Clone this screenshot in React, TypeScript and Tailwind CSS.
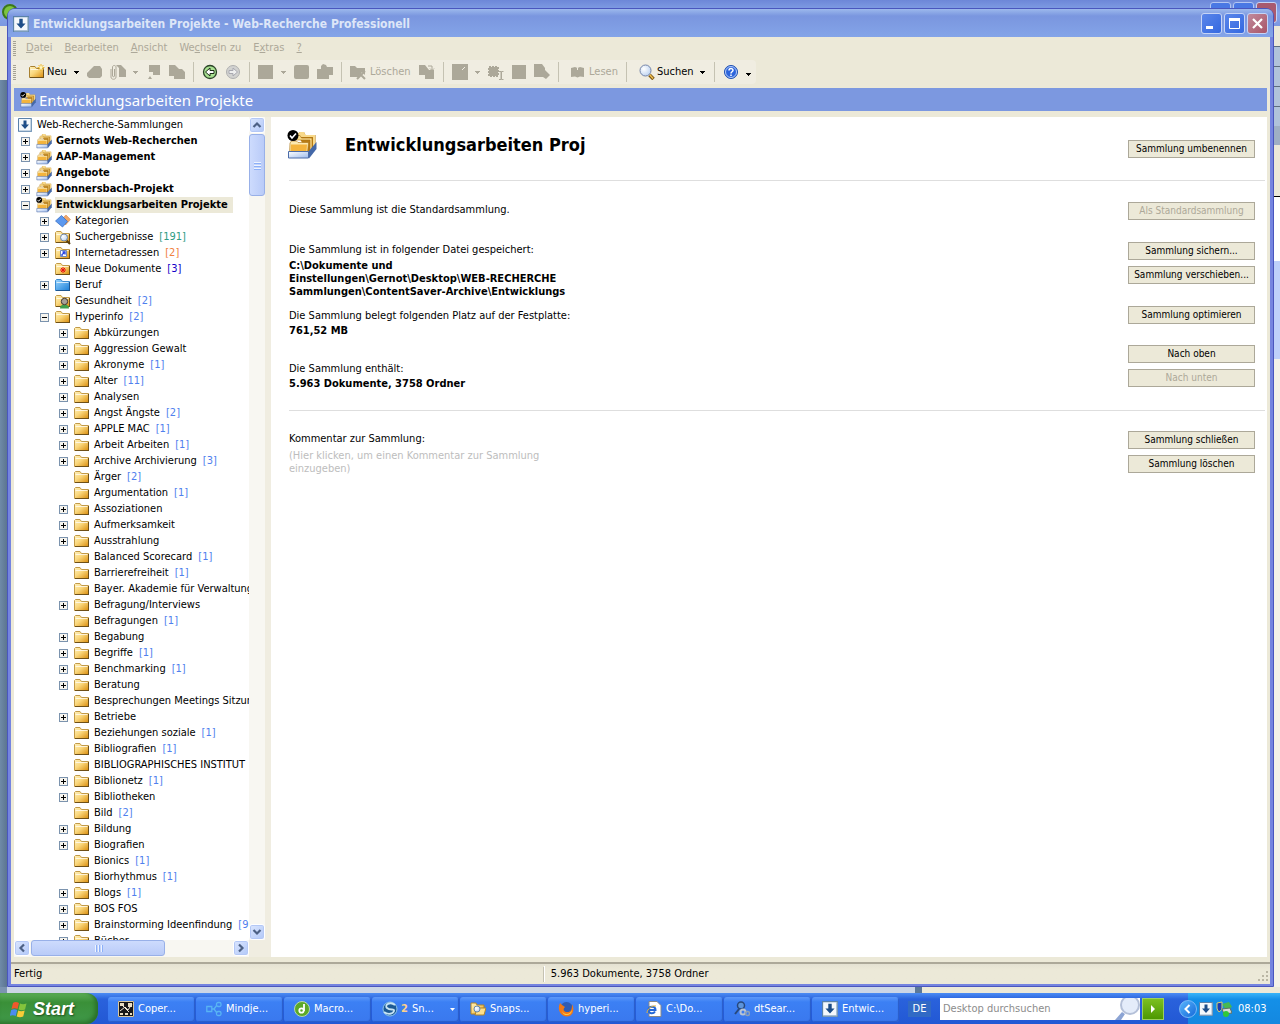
import { ReactNode, useState } from "react";
import clsx from "clsx";

type IconName =
  | "archive"
  | "archive-checked"
  | "categories"
  | "search-folder"
  | "link-folder"
  | "new-folder"
  | "blue-folder"
  | "person-folder"
  | "folder";

type TreeNode = {
  level: 0 | 1 | 2;
  label: string;
  sign?: "+" | "-";
  icon: IconName;
  count?: string;
  countColor?: string;
  selected?: boolean;
};

const topNodes: TreeNode[] = [
  { level: 0, label: "Gernots Web-Recherchen", sign: "+", icon: "archive" },
  { level: 0, label: "AAP-Management", sign: "+", icon: "archive" },
  { level: 0, label: "Angebote", sign: "+", icon: "archive" },
  { level: 0, label: "Donnersbach-Projekt", sign: "+", icon: "archive" },
  { level: 0, label: "Entwicklungsarbeiten Projekte", sign: "-", icon: "archive-checked", selected: true },
  { level: 1, label: "Kategorien", sign: "+", icon: "categories" },
  { level: 1, label: "Suchergebnisse", sign: "+", icon: "search-folder", count: "191", countColor: "text-[#2f9c84]" },
  { level: 1, label: "Internetadressen", sign: "+", icon: "link-folder", count: "2", countColor: "text-[#f08040]" },
  { level: 1, label: "Neue Dokumente", icon: "new-folder", count: "3", countColor: "text-[#1400c8]" },
  { level: 1, label: "Beruf", sign: "+", icon: "blue-folder" },
  { level: 1, label: "Gesundheit", icon: "person-folder", count: "2" },
  { level: 1, label: "Hyperinfo", sign: "-", icon: "folder", count: "2" },
];

// label, has children, document count
const hyperinfo: [string, boolean, string?][] = [
  ["Abkürzungen", true],
  ["Aggression Gewalt", true],
  ["Akronyme", true, "1"],
  ["Alter", true, "11"],
  ["Analysen", true],
  ["Angst Ängste", true, "2"],
  ["APPLE MAC", true, "1"],
  ["Arbeit Arbeiten", true, "1"],
  ["Archive Archivierung", true, "3"],
  ["Ärger", false, "2"],
  ["Argumentation", false, "1"],
  ["Assoziationen", true],
  ["Aufmerksamkeit", true],
  ["Ausstrahlung", true],
  ["Balanced Scorecard", false, "1"],
  ["Barrierefreiheit", false, "1"],
  ["Bayer. Akademie für Verwaltung", false],
  ["Befragung/Interviews", true],
  ["Befragungen", false, "1"],
  ["Begabung", true],
  ["Begriffe", true, "1"],
  ["Benchmarking", true, "1"],
  ["Beratung", true],
  ["Besprechungen Meetings Sitzung", false],
  ["Betriebe", true],
  ["Beziehungen soziale", false, "1"],
  ["Bibliografien", false, "1"],
  ["BIBLIOGRAPHISCHES INSTITUT", false],
  ["Biblionetz", true, "1"],
  ["Bibliotheken", true],
  ["Bild", false, "2"],
  ["Bildung", true],
  ["Biografien", true],
  ["Bionics", false, "1"],
  ["Biorhythmus", false, "1"],
  ["Blogs", true, "1"],
  ["BOS FOS", true],
  ["Brainstorming Ideenfindung", true, "9"],
  ["Bücher", true],
];

const nodes: TreeNode[] = [
  ...topNodes,
  ...hyperinfo.map(([label, open, count]): TreeNode => ({
    level: 2,
    label,
    sign: open ? "+" : undefined,
    icon: "folder",
    count,
  })),
];

function Gradients() {
  return (
    <svg width="0" height="0" className="absolute" aria-hidden="true">
      <defs>
        <linearGradient id="gold" x1="0" y1="0" x2="1" y2="1">
          <stop offset="0" stopColor="#fff2bc" />
          <stop offset="0.45" stopColor="#fad77c" />
          <stop offset="1" stopColor="#d98c0c" />
        </linearGradient>
        <linearGradient id="sky" x1="0" y1="0" x2="1" y2="1">
          <stop offset="0" stopColor="#9ad6ff" />
          <stop offset="1" stopColor="#1b7fd8" />
        </linearGradient>
        <linearGradient id="tray" x1="0" y1="0" x2="1" y2="1">
          <stop offset="0" stopColor="#ffffff" />
          <stop offset="1" stopColor="#9dbbec" />
        </linearGradient>
        <radialGradient id="lens" cx="0.35" cy="0.35" r="0.8">
          <stop offset="0" stopColor="#ffffff" />
          <stop offset="1" stopColor="#b4cdf0" />
        </radialGradient>
      </defs>
    </svg>
  );
}

function ArchiveIcon({ checked, className }: { checked?: boolean; className: string }) {
  return (
    <svg viewBox="0 0 30 30" className={className} aria-hidden="true">
      <path d="M11 6V3.500L13 2h4l1.500 3H28.500v12L22 24Z" fill="#b87c14" />
      <path d="M11 6V3.500L13 2h4l1.500 3H28v10l-2 3V7H11Z" fill="#f8d98a" />
      <path d="M7 9V7l2-1.500h4L14.500 8H25v12l-2 2V10H7Z" fill="#f8d98a" stroke="#a87010" strokeWidth=".6" />
      <path d="M3 13l1.500-2h5l1.500 1.500H21.500L20.500 23H2.500Z" fill="#fce9b0" stroke="#a87010" strokeWidth=".6" />
      <path d="M4 14.500H20L19.500 22H3.500Z" fill="#f4b43c" />
      <path d="M21 22l8.500-10v7L22 28.500Z" fill="#4468a8" />
      <path d="M1.500 21.500H21.500V28H1.500Z" fill="url(#tray)" stroke="#4c6ca8" />
      {checked && (
        <>
          <circle cx="6" cy="5.500" r="5.500" fill="#000" />
          <path d="M3 5.500l2 2.500 4-4.500" fill="none" stroke="#fff" strokeWidth="1.600" />
        </>
      )}
    </svg>
  );
}

function FolderShape({ fill, edge, bottom }: { fill: string; edge: string; bottom: string }) {
  return (
    <>
      <path d="M.5 13.500V3.500L1.500 2.500H6L7.500 4.500H14.500V13.500Z" fill={fill} stroke={edge} />
      <path d="M1.500 5.500H13.500" stroke="#fff" strokeOpacity="0.700" />
      <path d="M1 13.500H15M14.500 5V14" stroke={bottom} />
    </>
  );
}

function TreeIcon({ name }: { name: IconName }) {
  if (name === "archive" || name === "archive-checked") {
    return <ArchiveIcon checked={name === "archive-checked"} className="size-4 shrink-0" />;
  }
  return (
    <svg viewBox="0 0 16 16" className="size-4 shrink-0" aria-hidden="true">
      {name === "categories" && (
        <>
          <path d="M11 2l4.500 4.500-5 5.500-5-5Z" fill="#f0a868" stroke="#d08040" strokeWidth=".5" />
          <path d="M6.500 2.500l6 6-5 5.500L.5 8Z" fill="#5c98ee" stroke="#3068c0" strokeWidth=".7" />
        </>
      )}
      {name === "blue-folder" && <FolderShape fill="url(#sky)" edge="#3a8ad0" bottom="#1d5590" />}
      {name !== "categories" && name !== "blue-folder" && (
        <FolderShape fill="url(#gold)" edge="#c29a48" bottom="#6e5018" />
      )}
      {name === "search-folder" && (
        <>
          <path d="M11.500 11.500L15 15" stroke="#5a4010" strokeWidth="2" />
          <circle cx="9" cy="8.500" r="3.500" fill="url(#lens)" stroke="#7088a8" />
        </>
      )}
      {name === "link-folder" && (
        <>
          <path d="M5.500 5.500h6v6h-6Z" fill="#fff" stroke="#7088b8" />
          <path d="M7 11V9.500L9 8M7.500 7H10V9.500" fill="none" stroke="#1c3ce0" strokeWidth="1.300" />
        </>
      )}
      {name === "new-folder" && (
        <path d="M8 6v6M5 9h6M6 7l4 4M10 7l-4 4" stroke="#e81010" />
      )}
      {name === "person-folder" && (
        <>
          <path d="M5 15.500c0-3 2-4 4.500-4s4.500 1 4.500 4Z" fill="#3fa04c" />
          <circle cx="9.500" cy="8.500" r="3.200" fill="#a8a098" stroke="#403830" />
        </>
      )}
    </svg>
  );
}

function AppIcon({ className = "size-[14px]" }: { className?: string }) {
  return (
    <svg viewBox="0 0 14 14" className={clsx("shrink-0", className)} aria-hidden="true">
      <path d="M.5.5h13v13H.5Z" fill="#f4f8fc" stroke="#5a82aa" />
      <path d="M1 13h12V1" fill="none" stroke="#9ab4cc" />
      <path d="M5.500 2.500h3V6.500h2.500L7 11 3 6.500h2.500Z" fill="#1d4d88" />
    </svg>
  );
}

function Expander({ sign }: { sign?: "+" | "-" }) {
  if (!sign) return <span className="w-[9px] shrink-0" />;
  return (
    <button type="button" aria-label={sign === "+" ? "Aufklappen" : "Zuklappen"} className="size-[9px] shrink-0">
      <svg viewBox="0 0 9 9" className="block size-[9px]" shapeRendering="crispEdges">
        <path d="M.5.5h8v8h-8Z" fill="#f6f4ee" stroke="#7b93ae" />
        <path d="M2 4.500h5" stroke="#000" />
        {sign === "+" && <path d="M4.500 2v5" stroke="#000" />}
      </svg>
    </button>
  );
}

const indent = ["pl-[7px]", "pl-[26px]", "pl-[45px]"];

function TreeRow({ node }: { node: TreeNode }) {
  return (
    <li className={clsx("flex h-4 items-center whitespace-nowrap", indent[node.level])}>
      <Expander sign={node.sign} />
      <span className="w-[6px] shrink-0" />
      <TreeIcon name={node.icon} />
      <span
        className={clsx(
          "ml-[3px] h-4 pr-[5px] pl-px leading-4",
          node.level === 0 && "font-bold",
          node.selected && "bg-[#ece9d8]"
        )}
      >
        {node.label}
      </span>
      {node.count && (
        <span className={clsx("ml-px leading-4", node.countColor ?? "text-[#4f7fee]")}>[{node.count}]</span>
      )}
    </li>
  );
}

function ScrollButton({ label, d }: { label: string; d: string }) {
  return (
    <button
      type="button"
      aria-label={label}
      className="size-4 shrink-0 rounded-[3px] border border-white bg-linear-to-br from-[#dbe6fe] to-[#b2c8f8] shadow-[inset_0_0_0_1px_#b4c8f6]"
    >
      <svg viewBox="0 0 14 14" className="block size-[14px]">
        <path d={d} fill="none" stroke="#4d6185" strokeWidth="2.200" />
      </svg>
    </button>
  );
}

/* ---------- toolbar ---------- */

function ToolButton({ label, disabled = true, children }: { label: string; disabled?: boolean; children: ReactNode }) {
  return (
    <button type="button" aria-label={label} disabled={disabled} className="flex w-[23px] shrink-0 items-center justify-center">
      <svg viewBox="0 0 16 16" className="size-4" fill="#aca899">
        {children}
      </svg>
    </button>
  );
}

function DropArrow({ dark }: { dark?: boolean }) {
  return (
    <button type="button" aria-label="Mehr" className="flex w-[13px] shrink-0 items-center justify-center">
      <svg viewBox="0 0 5 3" className="h-[3px] w-[5px]" shapeRendering="crispEdges">
        <path d="M0 0h5L2.500 3Z" fill={dark ? "#000" : "#aca899"} />
      </svg>
    </button>
  );
}

function Separator() {
  return (
    <span className="flex w-[10px] shrink-0 justify-center py-[2px]">
      <span className="w-px bg-[#c5c2b2]" />
    </span>
  );
}

function Grip() {
  return (
    <svg viewBox="0 0 3 15" className="h-[15px] w-[3px] shrink-0" shapeRendering="crispEdges" aria-hidden="true">
      <path d="M1.500 0V15" stroke="#a5a294" strokeWidth="3" strokeDasharray="1 1" />
    </svg>
  );
}

function Toolbar() {
  return (
    <div className="flex h-6 w-fit items-stretch rounded-r-sm bg-[#f0ede1] pr-px">
      <span className="flex w-[14px] items-center pl-[2px]">
        <Grip />
      </span>
      <button type="button" className="flex w-[45px] items-center gap-[2px] pl-1">
        <svg viewBox="0 0 16 16" className="size-4 shrink-0">
          <FolderShape fill="url(#gold)" edge="#a88030" bottom="#6e5018" />
          <path d="M12 0v7M8.500 3.500h7M9.500 1l5 5M14.500 1l-5 5" stroke="#f0b828" />
          <circle cx="12" cy="3.500" r="1.500" fill="#fff8c0" />
        </svg>
        Neu
      </button>
      <DropArrow dark />
      <ToolButton label="Dokument">
        <path d="M0 9l4-4 3-3h6l2 3v7l-2 2H2l-2-2Z" />
      </ToolButton>
      <ToolButton label="Anhang">
        <path d="M6 1h5l5 5v7H9V4Z" />
        <path d="M1 5v8c0 3 5 3 5 0V3c0-2-3.500-2-3.500 0v9c0 1 2 1 2 0V5" fill="none" stroke="#aca899" />
      </ToolButton>
      <DropArrow />
      <ToolButton label="Markieren">
        <path d="M3 1h11v10H7V8H3ZM2 15l2-3 2 3Z" />
      </ToolButton>
      <ToolButton label="Kopieren">
        <path d="M0 1h6l4 4h3l3 3v7H5v-3H0Z" />
      </ToolButton>
      <Separator />
      <ToolButton label="Zurück" disabled={false}>
        <circle cx="8" cy="8" r="6.500" fill="#a8e090" stroke="#2c4428" strokeWidth="1.300" />
        <path d="M3.500 8L8 4v2.500h4v3H8V12Z" fill="#fff" stroke="#1c2c18" />
      </ToolButton>
      <ToolButton label="Vorwärts">
        <circle cx="8" cy="8" r="6.500" fill="#d2d2d0" stroke="#b0b0b0" />
        <path d="M12.500 8L8 4v2.500H4v3h4V12Z" fill="#eee" stroke="#a8a8b0" />
      </ToolButton>
      <Separator />
      <ToolButton label="Ansicht">
        <path d="M0 1h15v14H0Z" />
      </ToolButton>
      <DropArrow />
      <ToolButton label="Notiz">
        <rect x="0" y="1" width="15" height="14" rx="2" />
      </ToolButton>
      <ToolButton label="Anlegen">
        <path d="M0 5h4V2l2-2 3 1 1 2h6v8h-4v4H0Z" />
      </ToolButton>
      <Separator />
      <button type="button" disabled className="flex w-[69px] items-center gap-1 pl-1 text-[#aca899]">
        <svg viewBox="0 0 16 16" className="size-4 shrink-0" fill="#aca899">
          <path d="M0 2h5l2 2h8v7l-3-3-3 5H0Z" />
          <path d="M7 7l8 8M15 7l-8 8" stroke="#aca899" strokeWidth="2" />
        </svg>
        Löschen
      </button>
      <ToolButton label="Verschieben">
        <path d="M0 1h6l4 5h5v9H6v-4H0Z" />
        <path d="M9 2h4v4M11 4.500l2 2 2-2" fill="none" stroke="#aca899" />
      </ToolButton>
      <Separator />
      <ToolButton label="Bearbeiten">
        <path d="M0 0h16v16H0Z" />
        <path d="M10 6l3-3" stroke="#f0ede1" />
      </ToolButton>
      <DropArrow />
      <ToolButton label="Textmarke">
        <path d="M1 3h9v9H1Z" stroke="#aca899" strokeDasharray="2 1" strokeWidth="2" />
        <path d="M11 7.500h2v8h-2M15.500 7.500h-2v8h2" fill="none" stroke="#aca899" />
      </ToolButton>
      <ToolButton label="Fläche">
        <path d="M1 1h14v14H1Z" />
      </ToolButton>
      <ToolButton label="Kategorie">
        <path d="M0 0h8l3 4v2l5 5-4 4-3-2H0Z" />
      </ToolButton>
      <Separator />
      <button type="button" disabled className="flex w-[58px] items-center gap-1 pl-[7px] text-[#aca899]">
        <svg viewBox="0 0 15 16" className="h-4 w-[15px] shrink-0" fill="#aca899">
          <path d="M1 4l4-1 2.500 1L10 3l4 1v9l-4-.5-2.500 1-2.500-1-4 .5Z" />
          <path d="M7.500 4v2" stroke="#f0ede1" />
        </svg>
        Lesen
      </button>
      <Separator />
      <button type="button" className="flex w-[65px] items-center gap-[2px] pl-2">
        <svg viewBox="0 0 16 16" className="size-4 shrink-0">
          <path d="M10.500 11l4 4" stroke="#7a5410" strokeWidth="3.500" />
          <path d="M10.500 10.500l3.500 4" stroke="#f0c050" strokeWidth="1.500" />
          <circle cx="6.500" cy="6.500" r="5.500" fill="url(#lens)" stroke="#7484a8" />
        </svg>
        Suchen
      </button>
      <DropArrow dark />
      <Separator />
      <ToolButton label="Hilfe" disabled={false}>
        <circle cx="8" cy="8" r="6.500" fill="#2c64dc" stroke="#2050b0" />
        <circle cx="8" cy="8" r="5.500" fill="none" stroke="#b4ccf8" />
        <path d="M6 6.500c0-2.500 4-2.500 4-.2 0 1.500-2 1.500-2 3.200M8 10.500v1.500" fill="none" stroke="#fff" strokeWidth="1.500" />
      </ToolButton>
      <span className="flex pt-1">
        <DropArrow dark />
      </span>
    </div>
  );
}

const menus: [string, string, string][] = [
  ["", "D", "atei"],
  ["", "B", "earbeiten"],
  ["", "A", "nsicht"],
  ["We", "c", "hseln zu"],
  ["E", "x", "tras"],
  ["", "?", ""],
];

function MenuBar() {
  return (
    <nav className="flex h-[23px] items-center pl-[2px]">
      <Grip />
      <span className="w-1" />
      {menus.map(([before, key, after]) => (
        <button key={before + key} type="button" className="px-[6px] text-[#aca899]">
          {before}
          <u>{key}</u>
          {after}
        </button>
      ))}
    </nav>
  );
}

function CaptionButton({ label, close, children }: { label: string; close?: boolean; children: ReactNode }) {
  return (
    <button
      type="button"
      aria-label={label}
      className={clsx(
        "size-[21px] rounded-[3px] border border-[#c5d4f6]",
        close ? "bg-linear-to-br from-[#c08a9c] to-[#a85468]" : "bg-linear-to-br from-[#5a86ea] to-[#3468e0]"
      )}
    >
      <svg viewBox="0 0 19 19" className="block size-[19px]" fill="none" stroke="#fff">
        {children}
      </svg>
    </button>
  );
}

function TitleBar() {
  return (
    <header className="flex h-7 shrink-0 items-center rounded-t-md bg-linear-to-b from-[#9db9ec] via-[#7a96df] via-25% to-[#84a4e8] pt-px pr-[5px] pl-[5px]">
      <AppIcon className="size-4" />
      <h1 className="ml-1 flex-1 truncate text-[12px] leading-4 font-bold text-[#dde6f8]">
        Entwicklungsarbeiten Projekte - Web-Recherche Professionell
      </h1>
      <div className="flex gap-[2px]">
        <CaptionButton label="Minimieren">
          <path d="M4 13.500h7" strokeWidth="3" />
        </CaptionButton>
        <CaptionButton label="Maximieren">
          <path d="M4.500 5.500h10v9h-10Z" />
          <path d="M4 5.500h11" strokeWidth="3" />
        </CaptionButton>
        <CaptionButton label="Schließen" close>
          <path d="M5 5l9 9M14 5l-9 9" strokeWidth="2.200" />
        </CaptionButton>
      </div>
    </header>
  );
}

/* ---------- collection page ---------- */

function PageButton({ children, disabled }: { children: ReactNode; disabled?: boolean }) {
  return (
    <button
      type="button"
      disabled={disabled}
      className="h-[18px] w-[127px] border border-[#aca899] bg-[#ece9d8] text-center text-[10px] leading-4 whitespace-nowrap disabled:text-[#aca899]"
    >
      {children}
    </button>
  );
}

function Section({ className, actions, children }: { className: string; actions: ReactNode; children: ReactNode }) {
  return (
    <div className={clsx("flex justify-between pr-[10px]", className)}>
      <div>{children}</div>
      <div className="flex flex-col gap-[6px]">{actions}</div>
    </div>
  );
}

function CollectionPage() {
  const [comment, setComment] = useState("");

  return (
    <main className="min-w-0 flex-1 overflow-hidden bg-white pr-[2px] pl-[18px] leading-[13px]">
      <div className="flex h-[63px] items-start justify-between pt-[13px] pr-[10px]">
        <div className="flex items-center">
          <ArchiveIcon checked className="-ml-[2px] size-[30px]" />
          <h2 className="ml-7 text-[18px] leading-[30px] font-bold">Entwicklungsarbeiten Proj</h2>
        </div>
        <div className="pt-[10px]">
          <PageButton>Sammlung umbenennen</PageButton>
        </div>
      </div>
      <hr className="border-[#dedede]" />

      <Section className="mt-[21px] h-10" actions={<PageButton disabled>Als Standardsammlung</PageButton>}>
        <p className="pt-px">Diese Sammlung ist die Standardsammlung.</p>
      </Section>
      <Section
        className="h-16"
        actions={
          <>
            <PageButton>Sammlung sichern...</PageButton>
            <PageButton>Sammlung verschieben...</PageButton>
          </>
        }
      >
        <p className="pt-px">Die Sammlung ist in folgender Datei gespeichert:</p>
        <p className="pt-[3px] font-bold">
          C:\Dokumente und
          <br />
          Einstellungen\Gernot\Desktop\WEB-RECHERCHE
          <br />
          Sammlungen\ContentSaver-Archive\Entwicklungs
        </p>
      </Section>
      <Section className="h-[39px]" actions={<PageButton>Sammlung optimieren</PageButton>}>
        <p className="pt-[3px]">Die Sammlung belegt folgenden Platz auf der Festplatte:</p>
        <p className="pt-[2px] font-bold">761,52 MB</p>
      </Section>
      <Section
        className="h-[65px]"
        actions={
          <>
            <PageButton>Nach oben</PageButton>
            <PageButton disabled>Nach unten</PageButton>
          </>
        }
      >
        <p className="pt-[17px]">Die Sammlung enthält:</p>
        <p className="pt-[2px] font-bold">5.963 Dokumente, 3758 Ordner</p>
      </Section>
      <hr className="border-[#dedede]" />

      <Section
        className="mt-5"
        actions={
          <>
            <PageButton>Sammlung schließen</PageButton>
            <PageButton>Sammlung löschen</PageButton>
          </>
        }
      >
        <label htmlFor="comment" className="block pt-px">
          Kommentar zur Sammlung:
        </label>
        <textarea
          id="comment"
          rows={2}
          value={comment}
          onChange={(event) => setComment(event.target.value)}
          placeholder="(Hier klicken, um einen Kommentar zur Sammlung einzugeben)"
          className="mt-1 block w-[280px] resize-none overflow-hidden leading-[13px] outline-none placeholder:text-[#bdbdbd]"
        />
      </Section>
    </main>
  );
}

function TreePanel() {
  return (
    <aside className="flex w-[251px] shrink-0 flex-col bg-white">
      <div className="flex min-h-0 flex-1">
        <ul className="min-w-0 flex-1 overflow-hidden">
          <li className="flex h-4 items-center pl-1 whitespace-nowrap">
            <AppIcon />
            <span className="ml-[5px] leading-4">Web-Recherche-Sammlungen</span>
          </li>
          {nodes.map((node) => (
            <TreeRow key={node.label} node={node} />
          ))}
        </ul>
        <div className="flex w-4 shrink-0 flex-col bg-[#f8f7f2]">
          <ScrollButton label="Nach oben blättern" d="M3.500 9L7 5.500 10.500 9" />
          <div className="mt-px flex h-[62px] flex-col items-center justify-center gap-px rounded-[3px] border border-[#98b0e8] bg-linear-to-r from-[#cddbfd] to-[#b9cbf8]">
            <i className="h-px w-[7px] bg-[#eef4fe] shadow-[0_1px_0_#8cb0f8]" />
            <i className="mt-px h-px w-[7px] bg-[#eef4fe] shadow-[0_1px_0_#8cb0f8]" />
            <i className="mt-px h-px w-[7px] bg-[#eef4fe] shadow-[0_1px_0_#8cb0f8]" />
          </div>
          <span className="flex-1" />
          <ScrollButton label="Nach unten blättern" d="M3.500 5L7 8.500 10.500 5" />
        </div>
      </div>
      <div className="flex h-[17px] shrink-0 bg-[#f8f7f2]">
        <ScrollButton label="Nach links blättern" d="M9 3.500L5.500 7 9 10.500" />
        <div className="ml-px flex h-4 w-[134px] items-center justify-center gap-px rounded-[3px] border border-[#98b0e8] bg-linear-to-b from-[#cddbfd] to-[#b9cbf8]">
          <i className="h-[7px] w-px bg-[#eef4fe] shadow-[1px_0_0_#8cb0f8]" />
          <i className="ml-px h-[7px] w-px bg-[#eef4fe] shadow-[1px_0_0_#8cb0f8]" />
          <i className="ml-px h-[7px] w-px bg-[#eef4fe] shadow-[1px_0_0_#8cb0f8]" />
        </div>
        <span className="flex-1" />
        <ScrollButton label="Nach rechts blättern" d="M5 3.500L8.500 7 5 10.500" />
        <span className="w-4 bg-[#f0ede1]" />
      </div>
    </aside>
  );
}

function MainWindow() {
  return (
    <section className="absolute top-2 right-[6px] bottom-[6px] left-[7px] flex flex-col rounded-t-lg border border-[#4a56be] bg-[#7584e0]">
      <TitleBar />
      <div className="mx-[3px] mb-[2px] flex min-h-0 flex-1 flex-col bg-[#ece9d8]">
        <MenuBar />
        <Toolbar />
        <div className="mx-[3px] mt-1 flex h-[23px] shrink-0 items-center bg-[#7c98e0] pl-[6px] text-white">
          <ArchiveIcon checked className="size-4" />
          <span className="ml-[3px] font-['Noto_Sans',sans-serif] text-[15px] leading-[22px]">
            Entwicklungsarbeiten Projekte
          </span>
        </div>
        <div className="mx-[3px] mt-[6px] flex min-h-0 flex-1 gap-[6px] bg-[#f0ede1]">
          <TreePanel />
          <CollectionPage />
        </div>
        <footer className="mt-[5px] flex h-[22px] shrink-0 items-center border-t-2 border-[#aca899] bg-linear-to-b from-[#e4e1d2] via-[#ece9d8] via-30% to-[#ece9d8]">
          <span className="w-[42%] pl-[3px] leading-4">Fertig</span>
          <span className="ml-[3px] h-[15px] w-px bg-[#c5c2b2]" />
          <span className="flex-1 border-l border-white pl-[6px] leading-4">5.963 Dokumente, 3758 Ordner</span>
          <svg viewBox="0 0 12 12" className="mt-1 mr-px size-3" fill="#bab6a4" aria-hidden="true">
            <path d="M9 1h2v2H9ZM5 5h2v2H5ZM9 5h2v2H9ZM1 9h2v2H1ZM5 9h2v2H5ZM9 9h2v2H9Z" />
          </svg>
        </footer>
      </div>
    </section>
  );
}

// Slivers of the windows that lie behind the main one
function BackgroundWindows() {
  return (
    <div className="flex h-full flex-col" aria-hidden="true">
      <div className="flex h-[26px] shrink-0 items-start justify-between bg-linear-to-b from-[#6d87d8] via-[#87a5e8] to-[#7c98e0]">
        <svg viewBox="0 0 16 16" className="mt-1 ml-[2px] size-4">
          <circle cx="8" cy="8" r="7" fill="#7cc440" stroke="#3c7818" strokeWidth="2" />
        </svg>
        <div className="mt-[2px] mr-[3px] flex gap-[2px]">
          <i className="size-[21px] rounded-[3px] border border-[#b4c6f2] bg-[#4a78e4]" />
          <i className="size-[21px] rounded-[3px] border border-[#b4c6f2] bg-[#4a78e4]" />
          <i className="size-[21px] rounded-[3px] border border-[#c5d4f6] bg-[#a85a70]" />
        </div>
      </div>
      <div className="flex min-h-0 flex-1 justify-between">
        <div className="flex w-[7px] flex-col">
          <span className="h-[54px] bg-[#ece9d8]" />
          <span className="flex-1 bg-linear-to-r from-[#6f8aa8] to-[#5c7590]" />
        </div>
        <div className="flex w-[6px] flex-col">
          <span className="h-5 bg-[#ece9d8]" />
          <span className="h-5 border-t border-[#5c6c80] bg-[#b0c2da]" />
          <span className="h-5 border-t border-[#5c6c80] bg-[#b0c2da]" />
          <span className="h-5 border-t border-[#5c6c80] bg-[#b0c2da]" />
          <span className="h-5 border-t border-[#5c6c80] bg-[#b0c2da]" />
          <span className="h-[19px] bg-[#9fafc4]" />
          <span className="h-[52px] border-b border-black bg-[#ece9d8]" />
          <span className="h-16 bg-white" />
          <span className="h-[98px] bg-[#bed0fa]" />
          <span className="flex-1 bg-[#f4f2e8]" />
        </div>
      </div>
      <div className="flex h-[6px] shrink-0">
        <span className="w-[7px] bg-[#7c94b0]" />
        <span className="flex-1 bg-[#ccd6e6]" />
        <span className="w-[7px] bg-[#5c7898]" />
        <span className="w-[28%] bg-[#ece9d8]" />
      </div>
    </div>
  );
}

/* ---------- taskbar ---------- */

const tasks: { label: string; icon: ReactNode; group?: string }[] = [
  {
    label: "Coper...",
    icon: (
      <>
        <path d="M0 0h16v16H0Z" fill="#181818" />
        <path d="M.5.5h15v15H.5Z" fill="none" stroke="#d8c8a0" />
        <path d="M2 2h4v3H2ZM10 2h4v4h-4ZM2 12h3v2H2ZM7 12h3v2H7ZM12 12h2v2h-2Z" fill="#e8dcc0" />
        <path d="M2 10l5-4 3 3 4-6M4 4l7 7" stroke="#f0e8d8" fill="none" />
      </>
    ),
  },
  {
    label: "Mindje...",
    icon: (
      <g fill="none" stroke="#58b4f4" strokeWidth="1.300">
        <path d="M.8 5.500h5v5h-5ZM6 8h2l3-4M8 8l3 4" />
        <rect x="10.500" y="1.500" width="4.500" height="4" rx="1.500" />
        <rect x="10.500" y="10.500" width="4.500" height="4" rx="1.500" />
      </g>
    ),
  },
  {
    label: "Macro...",
    icon: (
      <>
        <circle cx="8" cy="8" r="7.500" fill="#5ca828" stroke="#cfe8b8" strokeWidth=".8" />
        <circle cx="7.500" cy="9.500" r="2.200" fill="none" stroke="#fff" strokeWidth="1.800" />
        <path d="M10 10V3" stroke="#fff" strokeWidth="1.800" />
      </>
    ),
  },
  {
    label: "Sn...",
    group: "2",
    icon: (
      <>
        <circle cx="8" cy="8" r="7" fill="#1c5a94" stroke="#8cc4e8" />
        <path d="M13 4C8 0 2 4 5 7s8 0 7 3-6 4-10 1" fill="none" stroke="#c8e4f4" strokeWidth="1.800" />
      </>
    ),
  },
  {
    label: "Snaps...",
    icon: (
      <>
        <path d="M1 13V2h5l1 2h7v9Z" fill="url(#gold)" stroke="#b08428" />
        <path d="M5 14l2-7h9l-2 7Z" fill="#ffe08c" stroke="#b08428" />
        <circle cx="7" cy="8" r="3" fill="url(#lens)" stroke="#6888a8" />
      </>
    ),
  },
  {
    label: "hyperi...",
    icon: (
      <>
        <circle cx="8.500" cy="7.500" r="6.500" fill="#2f5cb4" />
        <path d="M2 2c-3 6 0 13.500 7 13.500C15 15.500 17 8 14 3.500c0 5-1 7.500-4.500 7.500-4 0-5-3-2.500-5L4 4Z" fill="#f07818" />
        <path d="M4 10c2 4 8 4 10-1 0 5-8 8-10 1Z" fill="#fcc848" />
      </>
    ),
  },
  {
    label: "C:\\Do...",
    icon: (
      <>
        <path d="M3 .5h8l4 4v11H3Z" fill="#fff" stroke="#888" />
        <path d="M1.500 9h8c0-4.500-7-4.500-7 0 0 4 5 4 6.500 1.500" fill="none" stroke="#2468d8" strokeWidth="2" />
        <path d="M1 12c0-4 5-8 9-7" fill="none" stroke="#f0b830" />
      </>
    ),
  },
  {
    label: "dtSear...",
    icon: (
      <>
        <path d="M5 8l-4 5" stroke="#28487c" strokeWidth="2" />
        <circle cx="7" cy="4.500" r="3.500" fill="#5c94dc" stroke="#28487c" strokeWidth="1.500" />
        <circle cx="9" cy="11" r="2.500" fill="none" stroke="#b8c4d4" strokeWidth="2" />
        <circle cx="13.500" cy="12.500" r="2" fill="none" stroke="#8ca0b8" strokeWidth="1.500" />
      </>
    ),
  },
  { label: "Entwic...", icon: null },
];

function Taskbar() {
  return (
    <footer className="flex h-[31px] shrink-0 items-stretch bg-linear-to-b from-[#4c8cf4] via-[#2a62dc] via-20% to-[#2258d4] text-white">
      <button
        type="button"
        className="flex w-[98px] shrink-0 items-center gap-[5px] rounded-r-xl bg-linear-to-b from-[#5cae58] via-[#3a9038] via-30% to-[#40984a] pl-[10px] shadow-[inset_-3px_-2px_4px_#2a7028]"
      >
        <svg viewBox="0 0 18 18" className="size-[18px]" aria-hidden="true">
          <path d="M3 3c2-1.500 4-1 6 0L7.500 9c-2-1-4-1-6 0Z" fill="#f0582c" />
          <path d="M10 3.500c2 1 4 1 6.500 0L15 9.500c-2.500 1-4 1-6.500 0Z" fill="#84c43c" />
          <path d="M1.200 10c2-1 4-1 6 0l-1.500 6c-2-1-4-1-6 0Z" fill="#4c8cf0" />
          <path d="M8.200 10.500c2 1 4 1 6.500 0l-1.500 6c-2.500 1-4 1-6.500 0Z" fill="#f8cc38" />
        </svg>
        <span className="font-['Liberation_Sans',sans-serif] text-[18px] leading-6 font-bold italic [text-shadow:1px_1px_2px_#1c4c1c]">
          Start
        </span>
      </button>
      <div className="ml-[10px] flex min-w-0 flex-1 items-center gap-px pt-px">
        {tasks.map((task) => (
          <button
            key={task.label}
            type="button"
            className="flex h-[25px] max-w-[87px] min-w-0 flex-1 items-center rounded-[3px] bg-linear-to-b from-[#5c98fa] via-[#3c80f4] via-20% to-[#3a78ee] pl-[10px] shadow-[inset_-1px_-1px_1px_#2a5cc8]"
          >
            {task.icon ? (
              <svg viewBox="0 0 16 16" className="size-4 shrink-0" aria-hidden="true">
                {task.icon}
              </svg>
            ) : (
              <AppIcon className="size-4" />
            )}
            {task.group && <b className="ml-[3px] text-[#fcd08c]">{task.group}</b>}
            <span className="ml-1 flex-1 overflow-hidden text-left whitespace-nowrap">{task.label}</span>
            {task.group && (
              <svg viewBox="0 0 5 3" className="mr-1 h-[3px] w-[5px]">
                <path d="M0 0h5L2.500 3Z" fill="#fff" />
              </svg>
            )}
          </button>
        ))}
      </div>
      <div className="flex w-[280px] shrink-0 items-center">
        <span className="ml-[9px] w-[23px] bg-[#316ac5] text-center leading-4">DE</span>
        <div className="ml-[9px] flex h-[22px] w-[200px] items-center bg-white">
          <input
            type="text"
            aria-label="Desktop durchsuchen"
            placeholder="Desktop durchsuchen"
            className="h-5 min-w-0 flex-1 px-[3px] text-black outline-none placeholder:text-[#8c8c8c]"
          />
          <svg viewBox="0 0 26 22" className="h-[22px] w-[26px]" aria-hidden="true">
            <path d="M8 14l-7 8h6l4-6Z" fill="#8ca4d4" />
            <circle cx="16" cy="7" r="9" fill="#e4ecfa" stroke="#b4c0d8" strokeWidth="2" />
          </svg>
        </div>
        <button
          type="button"
          aria-label="Suche starten"
          className="ml-[2px] flex h-[22px] w-[22px] items-center justify-center border border-[#9cd060] bg-linear-to-b from-[#7cc020] to-[#4c9800]"
        >
          <svg viewBox="0 0 4 8" className="h-2 w-1">
            <path d="M0 0l4 4-4 4Z" fill="#fff" />
          </svg>
        </button>
      </div>
      <div className="flex w-[101px] shrink-0 items-center">
        <button
          type="button"
          aria-label="Ausgeblendete Symbole einblenden"
          className="relative -mr-[9px] size-[18px] shrink-0 rounded-full border border-[#78b8f8] bg-linear-to-br from-[#58b4fc] to-[#1468d8]"
        >
          <svg viewBox="0 0 16 16" className="block size-4">
            <path d="M9.500 4l-4 4 4 4" fill="none" stroke="#fff" strokeWidth="2" />
          </svg>
        </button>
        <div className="flex h-full flex-1 items-center bg-linear-to-b from-[#38b4f8] via-[#1490e8] via-20% to-[#1488e0] pl-[11px]">
          <AppIcon />
          <svg viewBox="0 0 16 16" className="ml-[3px] size-4 shrink-0" aria-hidden="true">
            <path d="M6 3l7-2 3 5-6 3Z" fill="#48b850" />
            <path d="M1 2l5-1v6c0 2-2 3-3 4-1-1-2-3-2-4Z" fill="#1c3cb0" stroke="#d8d070" />
            <path d="M6 8l8-1 2 5-8 1Z" fill="#d8dcd8" stroke="#607060" />
            <circle cx="10" cy="13" r="3" fill="#30c838" />
          </svg>
          <span className="ml-[6px] leading-4">08:03</span>
        </div>
      </div>
    </footer>
  );
}

export default function App() {
  return (
    <div className="flex h-screen flex-col overflow-hidden font-['DejaVu_Sans_Condensed','DejaVu_Sans',sans-serif] text-[11px] text-black">
      <Gradients />
      <div className="relative min-h-0 flex-1">
        <BackgroundWindows />
        <MainWindow />
      </div>
      <Taskbar />
    </div>
  );
}
